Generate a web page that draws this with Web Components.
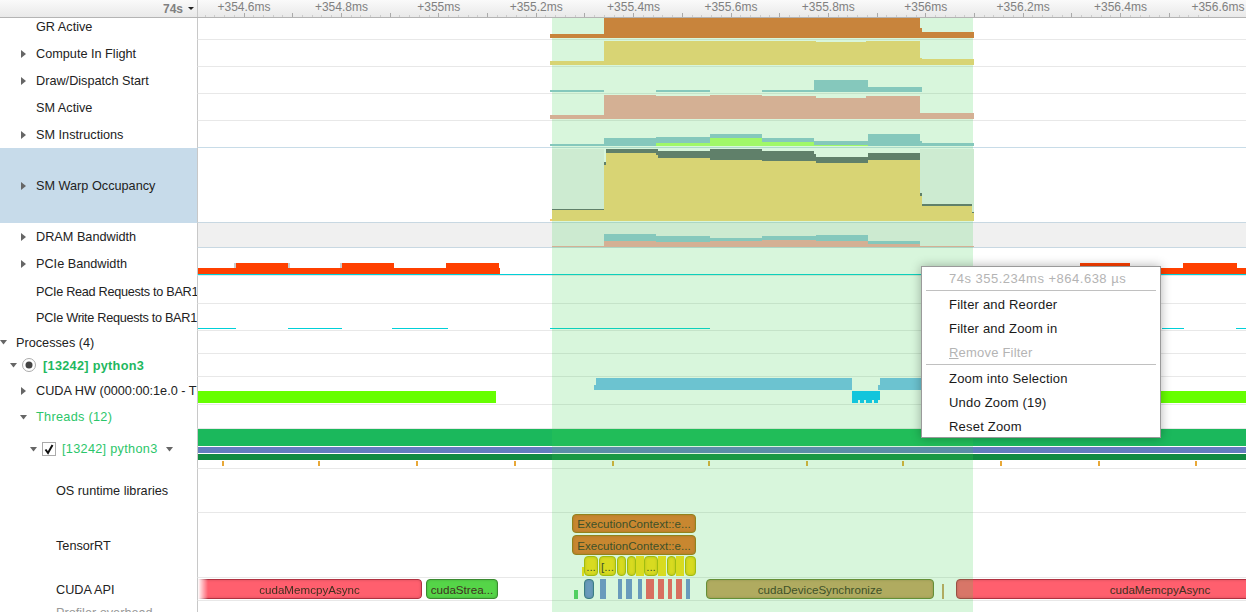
<!DOCTYPE html>
<html>
<head>
<meta charset="utf-8">
<title>Timeline</title>
<style>
    html, body { margin: 0; height: 612px; overflow: hidden; background: white; }
    body { font: 12.7px "Liberation Sans", Arial, sans-serif; color: #222; }
    .green { color: #2cc66a; letter-spacing: 0.3px; }
    .strong { color: #1fb860; font-weight: bold; letter-spacing: 0.3px; }
    .muted { color: #999; }
    .tight { letter-spacing: -0.3px; }
</style>
</head>
<body>

<profiler-view>
    <time-ruler slot="ruler" labels="+354.6ms,+354.8ms,+355ms,+355.2ms,+355.4ms,+355.6ms,+355.8ms,+356ms,+356.2ms,+356.4ms,+356.6ms"></time-ruler>

    <track-row y="13" h="27" scrolled over="550 604 34 38 #c8843c;604 920 18 38 #c8843c;920 922 28 38 #c8843c;922 974 32 38 #c8843c">
        <span slot="label">GR Active</span>
    </track-row>
    <track-row y="40" h="27" twisty="right" over="550 604 61 65 #d8d474;604 816 41 65 #d8d474;816 866 42 65 #d8d474;866 920 41 65 #d8d474;920 922 58 65 #d8d474;922 974 59 65 #d8d474">
        <span slot="label">Compute In Flight</span>
    </track-row>
    <track-row y="67" h="27" twisty="right" over="550 604 90 92 #85c8bc;656 710 90 92 #85c8bc;762 814 90 92 #85c8bc;814 868 80 92 #85c8bc;868 922 87 92 #85c8bc">
        <span slot="label">Draw/Dispatch Start</span>
    </track-row>
    <track-row y="94" h="27" over="550 604 115 119 #d4b094;604 656 95 119 #d4b094;656 710 96 119 #d4b094;710 762 95 119 #d4b094;762 816 96 119 #d4b094;816 866 98 119 #d4b094;866 920 96 119 #d4b094;920 922 113 119 #d4b094;922 974 113 119 #d4b094">
        <span slot="label">SM Active</span>
    </track-row>
    <track-row y="121" h="27" twisty="right" line="#c8dce8" over="550 604 144 146 #85c8bc;604 656 138 146 #85c8bc;656 710 137 143 #85c8bc;656 710 143 146 #a0f868;710 762 134 138 #85c8bc;710 762 138 146 #a0f868;762 814 138 142 #85c8bc;762 814 142 146 #a0f868;814 868 141 145 #85c8bc;814 868 145 146 #a0f868;868 920 134 146 #85c8bc;920 922 141 146 #85c8bc;922 974 143 146 #85c8bc">
        <span slot="label">SM Instructions</span>
    </track-row>
    <track-row y="148" h="75" twisty="right" selected line="#c8d8e2" over="552 604 149 209 #cdebd1;552 604 209 210 #60806a;552 604 210 221 #d8d474;604 606 162 165 #60806a;604 606 165 221 #d8d474;606 656 149 153 #60806a;606 656 153 221 #d8d474;656 658 149 155 #60806a;656 658 155 221 #d8d474;658 710 151 158 #60806a;658 710 158 221 #d8d474;710 762 149 160 #60806a;710 762 160 221 #d8d474;762 814 151 161 #60806a;762 814 161 221 #d8d474;814 816 154 161 #60806a;814 816 161 221 #d8d474;816 868 157 163 #60806a;816 868 163 221 #d8d474;868 920 153 160 #60806a;868 920 160 221 #d8d474;920 922 149 193 #cdebd1;920 922 193 196 #60806a;920 922 196 221 #d8d474;922 972 149 204 #cdebd1;922 972 204 206 #60806a;922 972 206 221 #d8d474;972 974 149 212 #cdebd1;972 974 212 213 #60806a;972 974 213 221 #d8d474;550 552 219 221 #f8c870">
        <span slot="label">SM Warp Occupancy</span>
    </track-row>
    <track-row y="223" h="25" dy="2" twisty="right" bg="#f0f0f0" line="#c8d8e2" over="552 604 246 247 #d4b094;604 656 234 241 #85c8bc;604 656 241 247 #d4b094;656 710 236 242 #85c8bc;656 710 242 247 #d4b094;710 762 238 241 #85c8bc;710 762 241 247 #d4b094;762 816 236 240 #85c8bc;762 816 240 247 #d4b094;816 868 235 241 #85c8bc;816 868 241 247 #d4b094;868 920 241 244 #85c8bc;868 920 244 247 #d4b094;920 974 246 247 #d4b094">
        <span slot="label">DRAM Bandwidth</span>
    </track-row>
    <track-row y="248" h="28" dy="4" twisty="right" bars="198 234 268 274 #ff4000;234 236 263 268 #cccccc;234 290 268 274 #ff4000;236 288 263 268 #ff4000;288 290 263 268 #cccccc;290 340 268 274 #ff4000;340 394 268 274 #ff4000;342 394 263 268 #ff4000;340 342 263 268 #cccccc;394 446 268 274 #ff4000;446 500 268 274 #ff4000;446 499 263 268 #ff4000;1078 1246 268 274 #ff4000;1080 1130 263 268 #ff4000;1183 1237 263 268 #ff4000;198 1246 274 275 #00d0d8">
        <span slot="label">PCIe Bandwidth</span>
    </track-row>
    <track-row y="276" h="28" dy="3">
        <span slot="label" class="tight">PCIe Read Requests to BAR1</span>
    </track-row>
    <track-row y="304" h="27" bars="198 236 328 329 #00d0d8;288 342 328 329 #00d0d8;392 448 328 329 #00d0d8;550 710 328 329 #00d0d8;1162 1184 328 329 #00d0d8;1236 1246 328 329 #00d0d8">
        <span slot="label" class="tight">PCIe Write Requests to BAR1</span>
    </track-row>
    <track-row y="331" h="23" twisty="down" tx="0" x="16">
        <span slot="label">Processes (4)</span>
    </track-row>
    <track-row y="354" h="23" twisty="down" tx="10" x="22">
        <span slot="label" class="strong"><radio-mark></radio-mark>[13242] python3</span>
    </track-row>
    <track-row y="377" h="28" twisty="right" bars="198 496 391 403 #66ff00;1160 1246 391 403 #66ff00;594 596 385 390 #78c0f0;596 852 378 390 #78c0f0;878 880 385 390 #78c0f0;880 930 378 390 #78c0f0;852 880 391 400 #08c2ff;852 858 400 403 #08c2ff;860 864 400 403 #08c2ff;866 872 400 403 #08c2ff;874 878 400 403 #08c2ff">
        <span slot="label">CUDA HW (0000:00:1e.0 - TU102</span>
    </track-row>
    <track-row y="405" h="24" twisty="down" tx="20" x="36">
        <span slot="label" class="green">Threads (12)</span>
    </track-row>
    <track-row y="429" h="40" twisty="down" tx="30" x="42" bars="198 1246 429 446 #1bb85c;198 1246 447 453 #647dbf;198 1246 454 460 #128a42;222 224 461 466 #e8a838;318 320 461 466 #e8a838;416 418 461 466 #e8a838;514 516 461 466 #e8a838;612 614 461 466 #e8a838;708 710 461 466 #e8a838;806 808 461 466 #e8a838;902 904 461 466 #e8a838;1000 1002 461 466 #e8a838;1098 1100 461 466 #e8a838;1195 1197 461 466 #e8a838">
        <span slot="label" class="green"><check-mark></check-mark>[13242] python3<down-caret></down-caret></span>
    </track-row>
    <track-row y="469" h="44" x="56">
        <span slot="label">OS runtime libraries</span>
    </track-row>
    <track-row y="513" h="65" x="56">
        <span slot="label">TensorRT</span>
        <call-bar slot="lane" left="572" right="696" top="1" bottom="20" fill="#eb7528" edge="#a87010">ExecutionContext::e...</call-bar>
        <call-bar slot="lane" left="572" right="696" top="22" bottom="42" fill="#eb7528" edge="#a87010">ExecutionContext::e...</call-bar>
        <call-bar slot="lane" left="582" right="584" top="54" bottom="63" fill="#ffde14" flat></call-bar>
        <call-bar slot="lane" left="584" right="598" top="43" bottom="63" fill="#ffde14" edge="#b8b800">...</call-bar>
        <call-bar slot="lane" left="599" right="616" top="43" bottom="63" fill="#ffde14" edge="#b8b800">[...</call-bar>
        <call-bar slot="lane" left="617" right="626" top="43" bottom="63" fill="#ffde14" edge="#b8b800"></call-bar>
        <call-bar slot="lane" left="627" right="636" top="43" bottom="63" fill="#ffde14" edge="#b8b800"></call-bar>
        <call-bar slot="lane" left="636" right="644" top="43" bottom="63" fill="#ffde14" flat></call-bar>
        <call-bar slot="lane" left="644" right="658" top="43" bottom="63" fill="#ffde14" edge="#b8b800">...</call-bar>
        <call-bar slot="lane" left="658" right="666" top="43" bottom="63" fill="#ffde14" flat></call-bar>
        <call-bar slot="lane" left="667" right="676" top="43" bottom="63" fill="#ffde14" edge="#b8b800"></call-bar>
        <call-bar slot="lane" left="676" right="684" top="43" bottom="63" fill="#ffde14" flat></call-bar>
        <call-bar slot="lane" left="685" right="696" top="43" bottom="63" fill="#ffde14" edge="#b8b800"></call-bar>
    </track-row>
    <track-row y="578" h="23" x="56">
        <span slot="label">CUDA API</span>
        <call-bar slot="lane" left="198" right="422" top="1" bottom="21" fill="#ff5f6e" edge="#b03040" fade>cudaMemcpyAsync</call-bar>
        <call-bar slot="lane" left="426" right="498" top="1" bottom="21" fill="#55d548" edge="#3a8a30">cudaStrea...</call-bar>
        <call-bar slot="lane" left="574" right="578" top="12" bottom="21" fill="#55cf64" flat></call-bar>
        <call-bar slot="lane" left="584" right="594" top="1" bottom="21" fill="#758ed7" edge="#3a6a90"></call-bar>
        <call-bar slot="lane" left="600" right="606" top="1" bottom="21" fill="#758ed7" flat></call-bar>
        <call-bar slot="lane" left="618" right="622" top="1" bottom="21" fill="#758ed7" flat></call-bar>
        <call-bar slot="lane" left="626" right="632" top="1" bottom="21" fill="#758ed7" flat></call-bar>
        <call-bar slot="lane" left="638" right="642" top="1" bottom="21" fill="#758ed7" flat></call-bar>
        <call-bar slot="lane" left="646" right="654" top="1" bottom="21" fill="#ff5764" flat></call-bar>
        <call-bar slot="lane" left="658" right="664" top="1" bottom="21" fill="#ff5764" flat></call-bar>
        <call-bar slot="lane" left="668" right="672" top="1" bottom="21" fill="#ff5764" flat></call-bar>
        <call-bar slot="lane" left="676" right="682" top="1" bottom="21" fill="#ff5764" flat></call-bar>
        <call-bar slot="lane" left="686" right="690" top="1" bottom="21" fill="#758ed7" flat></call-bar>
        <call-bar slot="lane" left="706" right="934" top="1" bottom="21" fill="#cda264" edge="#6f7f30">cudaDeviceSynchronize</call-bar>
        <call-bar slot="lane" left="942" right="944" top="6" bottom="21" fill="#cda264" flat></call-bar>
        <call-bar slot="lane" left="956" right="1364" top="1" bottom="21" fill="#ff5f6e" edge="#b03040">cudaMemcpyAsync</call-bar>
    </track-row>
    <track-row y="601" h="23" x="56">
        <span slot="label" class="muted">Profiler overhead</span>
    </track-row>

    <context-menu slot="menu">
        <menu-item disabled class="head">74s 355.234ms +864.638 µs</menu-item>
        <menu-sep></menu-sep>
        <menu-item>Filter and Reorder</menu-item>
        <menu-item>Filter and Zoom in</menu-item>
        <menu-item disabled><u>R</u>emove Filter</menu-item>
        <menu-sep></menu-sep>
        <menu-item>Zoom into Selection</menu-item>
        <menu-item>Undo Zoom (19)</menu-item>
        <menu-item>Reset Zoom</menu-item>
    </context-menu>
</profiler-view>

<script>
class ProfilerView extends HTMLElement {
    constructor() {
        super();
        this.attachShadow({ mode: 'open' });
        this.shadowRoot.innerHTML = `
            <style>
                :host {
                    display: flex;
                    flex-direction: column;
                    position: relative;
                    width: 1246px;
                    height: 612px;
                    overflow: hidden;
                }
                .tracks {
                    flex: 1;
                    min-height: 0;
                    overflow: hidden;
                }
                .selection {
                    position: absolute;
                    left: 552px;
                    width: 421px;
                    top: 18px;
                    bottom: 0;
                    z-index: 1;
                    background: rgba(60, 210, 80, 0.2);
                    pointer-events: none;
                }
            </style>
            <slot name="ruler"></slot>
            <div class="tracks"><slot></slot></div>
            <div class="selection"></div>
            <slot name="menu"></slot>
        `;
    }
}

class TimeRuler extends HTMLElement {
    constructor() {
        super();
        this.attachShadow({ mode: 'open' });
    }

    connectedCallback() {
        const step = 97.4;
        const labels = this.getAttribute('labels').split(',');
        let ticks = '';
        for (let i = 0; i < 110; i++) {
            const x = Math.round(243.5 - 198 - step + i * step / 10);
            const h = i % 5 === 0 ? 4 : 2;
            ticks += `<rect x="${x}" y="${17 - h}" width="1" height="${h}" fill="${i % 5 === 0 ? '#aaa' : '#ccc'}"/>`;
        }
        this.shadowRoot.innerHTML = `
            <style>
                :host {
                    display: flex;
                    flex: none;
                    height: 17px;
                    position: relative;
                    z-index: 4;
                    background: linear-gradient(#fafafa, #e9e9e9);
                    border-bottom: 1px solid #b4b4b4;
                }
                .corner {
                    flex: none;
                    box-sizing: border-box;
                    width: 198px;
                    border-right: 1px solid #c8c8c8;
                    padding-right: 3px;
                    display: flex;
                    justify-content: flex-end;
                    align-items: center;
                    gap: 5px;
                    font: bold 12px "Liberation Sans", Arial, sans-serif;
                    color: #808080;
                }
                .corner i {
                    border: 3px solid transparent;
                    border-top: 3px solid #222;
                    border-bottom: 0;
                }
                .scale {
                    flex: 1;
                    position: relative;
                    overflow: hidden;
                }
                .labels {
                    display: flex;
                    margin-left: -2.7px;
                    height: 13px;
                    align-items: center;
                    font: 12px "Liberation Sans", Arial, sans-serif;
                    color: #808080;
                }
                .labels span {
                    flex: 0 0 ${step}px;
                    text-align: center;
                    white-space: nowrap;
                }
                svg {
                    position: absolute;
                    left: 0;
                    top: 0;
                }
            </style>
            <div class="corner">74s<i></i></div>
            <div class="scale">
                <div class="labels">${labels.map(l => `<span>${l}</span>`).join('')}</div>
                <svg width="1048" height="17" shape-rendering="crispEdges">${ticks}</svg>
            </div>
        `;
    }
}

function barRects(spec) {
    if (!spec) return '';
    return spec.split(';').map(bar => {
        const [x1, x2, t, b, color] = bar.trim().split(' ');
        return `<rect x="${x1}" y="${t}" width="${x2 - x1}" height="${b - t}" fill="${color}"/>`;
    }).join('');
}

class TrackRow extends HTMLElement {
    constructor() {
        super();
        this.attachShadow({ mode: 'open' });
    }

    connectedCallback() {
        const y = this.getAttribute('y');
        const h = this.getAttribute('h');
        const twisty = this.getAttribute('twisty');
        const tx = +(this.getAttribute('tx') || 21);
        const x = +(this.getAttribute('x') || 36);
        const box = `viewBox="198 ${y} 1048 ${h}" width="1048" height="${h}" shape-rendering="crispEdges"`;

        let arrow = '';
        let textGap = x - tx;
        if (twisty === 'right') {
            arrow = '<svg class="twisty" width="5" height="8"><path d="M0 0L5 4L0 8Z" fill="#666"/></svg>';
            textGap -= 5;
        } else if (twisty === 'down') {
            arrow = '<svg class="twisty" width="7" height="5"><path d="M0 0H7L3.5 4.5Z" fill="#666"/></svg>';
            textGap -= 7;
        }
        const pad = twisty ? tx : x;

        this.shadowRoot.innerHTML = `
            <style>
                :host {
                    display: flex;
                    position: relative;
                    height: ${h}px;
                }
                /* the list is scrolled a little, so the first row starts under the ruler */
                :host([scrolled]) {
                    margin-top: -5px;
                }
                :host([selected]) .label {
                    background: #c7dbea;
                }
                .label {
                    flex: none;
                    box-sizing: border-box;
                    width: 197px;
                    padding-left: ${pad}px;
                    padding-top: ${this.getAttribute('dy') || 0}px;
                    display: flex;
                    align-items: center;
                    overflow: hidden;
                    white-space: nowrap;
                }
                .twisty {
                    flex: none;
                    margin-right: ${twisty ? textGap : 0}px;
                }
                .lane {
                    flex: none;
                    position: relative;
                    box-sizing: border-box;
                    width: 1049px;
                    border-left: 1px solid #c8c8c8;
                    border-bottom: 1px solid ${this.getAttribute('line') || '#e8e8e8'};
                    background: ${this.getAttribute('bg') || 'white'};
                }
                svg.chart {
                    position: absolute;
                    left: 0;
                    top: 0;
                }
                svg.above {
                    z-index: 2;
                }
            </style>
            <div class="label">${arrow}<slot name="label"></slot></div>
            <div class="lane">
                <svg class="chart" ${box}>${barRects(this.getAttribute('bars'))}</svg>
                <slot name="lane"></slot>
                <svg class="chart above" ${box}>${barRects(this.getAttribute('over'))}</svg>
            </div>
        `;
    }
}

class CallBar extends HTMLElement {
    constructor() {
        super();
        this.attachShadow({ mode: 'open' });
    }

    connectedCallback() {
        const left = +this.getAttribute('left');
        const right = +this.getAttribute('right');
        const top = +this.getAttribute('top');
        const bottom = +this.getAttribute('bottom');
        const fill = this.getAttribute('fill');
        const edge = this.getAttribute('edge') || fill;
        const flat = this.hasAttribute('flat');
        const fade = this.hasAttribute('fade');
        this.shadowRoot.innerHTML = `
            <style>
                :host {
                    position: absolute;
                    left: ${left - 198}px;
                    width: ${right - left}px;
                    top: ${top}px;
                    height: ${bottom - top}px;
                }
                div {
                    box-sizing: border-box;
                    height: 100%;
                    background: ${fill};
                    border: ${flat ? 0 : 1}px solid ${edge};
                    border-radius: ${flat ? 0 : 4}px;
                    ${flat ? '' : 'box-shadow: inset 0 0 3px rgba(0, 0, 0, 0.18);'}
                    ${fade ? 'border-left: 0; border-radius: 0 4px 4px 0;' : ''}
                    ${fade ? '-webkit-mask-image: linear-gradient(to right, transparent, black 10px); mask-image: linear-gradient(to right, transparent, black 10px);' : ''}
                    display: flex;
                    align-items: center;
                    justify-content: center;
                    overflow: hidden;
                    white-space: nowrap;
                    font: 11.6px "Liberation Sans", Arial, sans-serif;
                    color: #403020;
                }
            </style>
            <div><slot></slot></div>
        `;
    }
}

class RadioMark extends HTMLElement {
    constructor() {
        super();
        this.attachShadow({ mode: 'open' }).innerHTML = `
            <style>
                :host {
                    display: inline-flex;
                    vertical-align: middle;
                    margin-right: 7px;
                    margin-top: -2px;
                }
            </style>
            <svg width="14" height="14">
                <circle cx="7" cy="7" r="6.5" fill="white" stroke="#aaa"/>
                <circle cx="7" cy="7" r="3.5" fill="#444"/>
            </svg>
        `;
    }
}

class CheckMark extends HTMLElement {
    constructor() {
        super();
        this.attachShadow({ mode: 'open' }).innerHTML = `
            <style>
                :host {
                    display: inline-flex;
                    vertical-align: middle;
                    margin-right: 6px;
                    margin-top: -2px;
                }
            </style>
            <svg width="14" height="14">
                <rect x="0.5" y="0.5" width="13" height="13" fill="white" stroke="#aaa"/>
                <path d="M3.5 7.5L6 11L10.5 3" fill="none" stroke="#111" stroke-width="2"/>
            </svg>
        `;
    }
}

class DownCaret extends HTMLElement {
    constructor() {
        super();
        this.attachShadow({ mode: 'open' }).innerHTML = `
            <style>
                :host {
                    display: inline-flex;
                    vertical-align: middle;
                    margin-left: 8px;
                    margin-top: -1px;
                }
            </style>
            <svg width="7" height="5"><path d="M0 0H7L3.5 4.5Z" fill="#666"/></svg>
        `;
    }
}

class ContextMenu extends HTMLElement {
    constructor() {
        super();
        this.attachShadow({ mode: 'open' }).innerHTML = `
            <style>
                :host {
                    display: block;
                    position: absolute;
                    z-index: 5;
                    left: 921px;
                    top: 266px;
                    width: 240px;
                    height: 172px;
                    box-sizing: border-box;
                    background: white;
                    border: 1px solid #9a9a9a;
                    box-shadow: 0 0 10px rgba(0, 0, 0, 0.3);
                    font-size: 13px;
                    letter-spacing: 0.2px;
                }
            </style>
            <slot></slot>
        `;
    }
}

class MenuItem extends HTMLElement {
    constructor() {
        super();
        this.attachShadow({ mode: 'open' }).innerHTML = `
            <style>
                :host {
                    display: block;
                    height: 24px;
                    line-height: 25px;
                    padding-left: 27px;
                    color: #1a1a1a;
                    white-space: nowrap;
                }
                :host([disabled]) {
                    color: #b4b4b4;
                }
                :host(.head) {
                    height: 23px;
                    line-height: 24px;
                    letter-spacing: 0.5px;
                }
            </style>
            <slot></slot>
        `;
    }
}

class MenuSep extends HTMLElement {
    constructor() {
        super();
        this.attachShadow({ mode: 'open' }).innerHTML = `
            <style>
                :host {
                    display: block;
                    height: 2px;
                    margin: 0 4px;
                    box-sizing: border-box;
                    border-top: 1px solid #c0c0c0;
                }
            </style>
        `;
    }
}

customElements.define('profiler-view', ProfilerView);
customElements.define('time-ruler', TimeRuler);
customElements.define('track-row', TrackRow);
customElements.define('call-bar', CallBar);
customElements.define('radio-mark', RadioMark);
customElements.define('check-mark', CheckMark);
customElements.define('down-caret', DownCaret);
customElements.define('context-menu', ContextMenu);
customElements.define('menu-item', MenuItem);
customElements.define('menu-sep', MenuSep);
</script>
</body>
</html>
